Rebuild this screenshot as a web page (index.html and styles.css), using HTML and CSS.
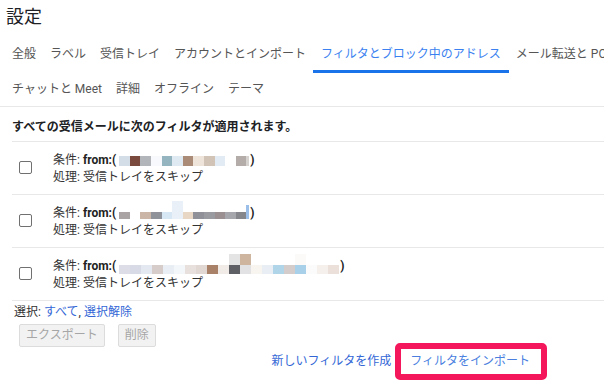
FILE: index.html
```html
<!DOCTYPE html>
<html lang="ja">
<head>
<meta charset="utf-8">
<title>設定</title>
<link rel="stylesheet" href="styles.css">
</head>
<body>
<h1 class="title">設定</h1>
<nav class="tabs">
  <div class="tabrow">
    <span class="tab">全般</span>
    <span class="tab">ラベル</span>
    <span class="tab">受信トレイ</span>
    <span class="tab">アカウントとインポート</span>
    <span class="tab active">フィルタとブロック中のアドレス</span>
    <span class="tab">メール転送と POP/IMAP</span>
  </div>
  <div class="tabrow second">
    <span class="tab">チャットと Meet</span>
    <span class="tab">詳細</span>
    <span class="tab">オフライン</span>
    <span class="tab">テーマ</span>
  </div>
</nav>
<p class="heading">すべての受信メールに次のフィルタが適用されます。</p>
<div class="filters">
  <div class="filter">
    <span class="cb"></span>
    <div class="ftext">
      <div>条件: <b>from:(<span class="mosaic m1"><span class="cell" style="--c:#d3dde8"></span><span class="cell" style="--c:#7b4a3f"></span><span class="cell" style="--c:#b2b5ba"></span><span class="cell" style="--c:#f7f9fc"></span><span class="cell" style="--c:#94b5bf"></span><span class="cell" style="--c:#dee9f1"></span><span class="cell" style="--c:#a98b78"></span><span class="cell" style="--c:#efe4da"></span><span class="cell" style="--c:#d2c3b7"></span><span class="cell" style="--c:#e2eaf3"></span><span class="cell" style="--c:#ffffff"></span><span class="cell" style="--c:#b4aca8"></span><span class="cell thin" style="--c:#d6d2d0"></span></span>)</b></div>
      <div>処理: 受信トレイをスキップ</div>
    </div>
  </div>
  <div class="filter">
    <span class="cb"></span>
    <div class="ftext">
      <div>条件: <b>from:(<span class="mosaic m2"><span class="cell" style="--c:#aaa5a4"></span><span class="cell" style="--c:transparent"></span><span class="cell" style="--c:#cab5a7"></span><span class="cell" style="--c:#8f9299"></span><span class="cell" style="--c:#d7e7f4"></span><span class="cell tall" style="--c:#e9f0f8"></span><span class="cell" style="--c:#e9d7c5"></span><span class="cell" style="--c:#909198"></span><span class="cell" style="--c:#9a9ba1"></span><span class="cell" style="--c:#9b9091"></span><span class="cell" style="--c:#a5a7ac"></span><span class="cell" style="--c:#85878d"></span><span class="cell thin mid" style="--c:#9cbfe9"></span></span>)</b></div>
      <div>処理: 受信トレイをスキップ</div>
    </div>
  </div>
  <div class="filter">
    <span class="cb"></span>
    <div class="ftext">
      <div>条件: <b>from:(<span class="mosaic m3"><span class="cell" style="--c:#dcdde6"></span><span class="cell" style="--c:#d8dbe6"></span><span class="cell" style="--c:#e4e8f0"></span><span class="cell" style="--c:#d6cdcb"></span><span class="cell" style="--c:#e8eef4"></span><span class="cell" style="--c:#f4f7fa"></span><span class="cell" style="--c:#e8e0dc"></span><span class="cell" style="--c:#e2d8d3"></span><span class="cell" style="--c:#a98068"></span><span class="cell" style="--c:#f0ebe6"></span><span class="cell" style="--c:#5f6066;--u:#e4e4e4"></span><span class="cell" style="--c:#e2e2e4;--u:#cdb5a0"></span><span class="cell" style="--c:#f8f4f0"></span><span class="cell" style="--c:#e8eef4"></span><span class="cell" style="--c:#b0d4e8"></span><span class="cell" style="--c:#d4ccca"></span><span class="cell" style="--c:#a8d0e8;--u:#fcfaf8"></span><span class="cell" style="--c:#fbfbfb"></span><span class="cell" style="--c:#f6f0ec"></span><span class="cell" style="--c:#ece0da"></span></span>)</b></div>
      <div>処理: 受信トレイをスキップ</div>
    </div>
  </div>
</div>
<div class="select">選択: <a class="link">すべて</a>, <a class="link">選択解除</a></div>
<div class="buttons">
  <span class="btn">エクスポート</span>
  <span class="btn">削除</span>
</div>
<div class="actions">
  <a class="link">新しいフィルタを作成</a>
  <a class="link import">フィルタをインポート</a>
</div>
</body>
</html>
```

FILE: styles.css
```css
html, body {
  margin: 0;
  padding: 0;
  background: #ffffff;
}
body {
  width: 604px;
  height: 382px;
  overflow: hidden;
  font-family: Roboto, "Noto Sans CJK JP", sans-serif;
  font-size: 12px;
  color: #222222;
}
.title {
  margin: 0;
  padding: 5px 0 0 6px;
  font-size: 18px;
  line-height: 24px;
  font-weight: normal;
  color: #202124;
}
.tabs {
  margin-top: 9px;
  border-bottom: 1px solid #e8e8e8;
}
.tabrow {
  display: flex;
  flex-wrap: nowrap;
  padding-left: 5px;
  white-space: nowrap;
  overflow: hidden;
}
.tab {
  flex: none;
  padding: 0 7px;
  line-height: 32px;
  border-bottom: 3px solid transparent;
  color: #555555;
}
.tab.active {
  padding: 0 8px;
  color: #3b82f0;
  border-bottom-color: #1a73e8;
}
.tabrow.second .tab {
  line-height: 33px;
  border-bottom: 0;
}
.heading {
  margin: 0;
  padding: 11px 12px 5px;
  line-height: 18px;
  font-weight: bold;
  color: #202124;
}
.filters {
  margin-left: 12px;
  border-bottom: 1px solid #e8e8e8;
}
.filter {
  display: flex;
  align-items: flex-start;
  box-sizing: border-box;
  height: 53px;
  padding-top: 10px;
  border-top: 1px solid #e8e8e8;
}
.cb {
  flex: none;
  box-sizing: border-box;
  width: 13px;
  height: 13px;
  margin: 9px 21px 0 7px;
  border: 1px solid #707070;
  border-radius: 2px;
}
.ftext {
  line-height: 17px;
  color: #333333;
}
.ftext b {
  font-weight: bold;
  color: #222222;
}
.mosaic {
  display: inline-block;
  overflow: hidden;
  font-size: 0;
  line-height: 0;
  margin: -14px 1px 0 3px;
}
.cell {
  display: inline-block;
  vertical-align: bottom;
  width: 10.6px;
  background: var(--c);
}
.cell.thin {
  width: 3px;
}
.m1 {
  vertical-align: -2px;
}
.m1 .cell {
  height: 10px;
}
.m2 {
  vertical-align: -2px;
}
.m2 .cell {
  height: 7px;
}
.m2 .cell.tall {
  height: 18px;
}
.m2 .cell.mid {
  height: 14px;
}
.m3 {
  vertical-align: -4px;
}
.m3 .cell {
  width: 11px;
  height: 20px;
  background: linear-gradient(var(--u, transparent) 0 11px, var(--c) 11px 20px);
}
.select {
  padding: 3px 0 0 14px;
  line-height: 17px;
  color: #333333;
}
.link {
  color: #3367d6;
  text-decoration: none;
}
.buttons {
  display: flex;
  gap: 13px;
  margin: 3px 0 0 19px;
}
.btn {
  box-sizing: border-box;
  height: 23px;
  min-width: 38px;
  padding: 0 6px;
  line-height: 21px;
  text-align: center;
  color: #a6a6a6;
  background: #f2f2f2;
  border: 1px solid #dcdcdc;
  border-radius: 2px;
}
.actions {
  display: flex;
  justify-content: flex-end;
  margin-top: 6px;
  padding-right: 74px;
  line-height: 17px;
}
.import {
  position: relative;
  margin-left: 19px;
  color: #4a7fe0;
}
.import::after {
  content: "";
  position: absolute;
  left: -15px;
  right: -17px;
  top: -10px;
  bottom: -10px;
  border: 6px solid #f5175b;
  border-radius: 5px;
}
```
